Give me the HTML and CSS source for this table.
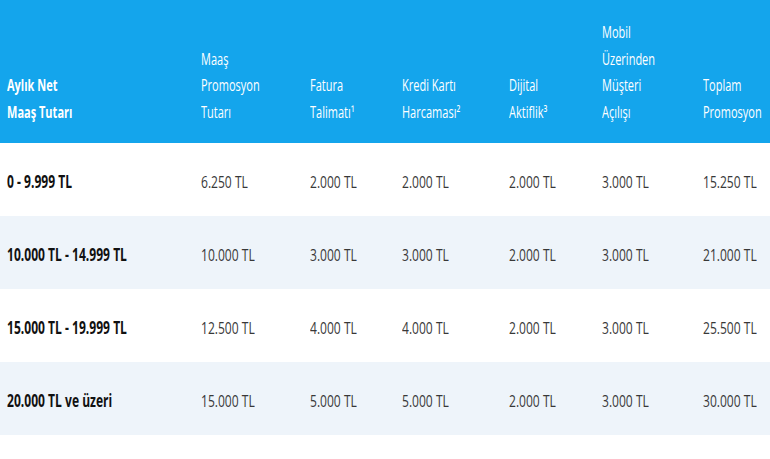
FILE: index.html
```html
<!DOCTYPE html>
<html lang="tr">
<head>
<meta charset="utf-8">
<title>Maaş Promosyon</title>
<link rel="stylesheet" href="styles.css">
</head>
<body>
<table class="promo">
  <colgroup>
    <col class="c1"><col class="c2"><col class="c3"><col class="c4"><col class="c5"><col class="c6"><col class="c7">
  </colgroup>
  <thead>
    <tr>
      <th class="first"><span class="sq">Aylık Net<br>Maaş Tutarı</span></th>
      <th><span class="sq">Maaş<br>Promosyon<br>Tutarı</span></th>
      <th><span class="sq">Fatura<br>Talimatı¹</span></th>
      <th><span class="sq">Kredi Kartı<br>Harcaması²</span></th>
      <th><span class="sq">Dijital<br>Aktiflik³</span></th>
      <th><span class="sq">Mobil<br>Üzerinden<br>Müşteri<br>Açılışı</span></th>
      <th><span class="sq">Toplam<br>Promosyon</span></th>
    </tr>
  </thead>
  <tbody>
    <tr>
      <td class="first"><span class="sq">0 - 9.999 TL</span></td>
      <td><span class="sq">6.250 TL</span></td>
      <td><span class="sq">2.000 TL</span></td>
      <td><span class="sq">2.000 TL</span></td>
      <td><span class="sq">2.000 TL</span></td>
      <td><span class="sq">3.000 TL</span></td>
      <td><span class="sq">15.250 TL</span></td>
    </tr>
    <tr class="alt">
      <td class="first"><span class="sq">10.000 TL - 14.999 TL</span></td>
      <td><span class="sq">10.000 TL</span></td>
      <td><span class="sq">3.000 TL</span></td>
      <td><span class="sq">3.000 TL</span></td>
      <td><span class="sq">2.000 TL</span></td>
      <td><span class="sq">3.000 TL</span></td>
      <td><span class="sq">21.000 TL</span></td>
    </tr>
    <tr>
      <td class="first"><span class="sq">15.000 TL - 19.999 TL</span></td>
      <td><span class="sq">12.500 TL</span></td>
      <td><span class="sq">4.000 TL</span></td>
      <td><span class="sq">4.000 TL</span></td>
      <td><span class="sq">2.000 TL</span></td>
      <td><span class="sq">3.000 TL</span></td>
      <td><span class="sq">25.500 TL</span></td>
    </tr>
    <tr class="alt">
      <td class="first"><span class="sq">20.000 TL ve üzeri</span></td>
      <td><span class="sq">15.000 TL</span></td>
      <td><span class="sq">5.000 TL</span></td>
      <td><span class="sq">5.000 TL</span></td>
      <td><span class="sq">2.000 TL</span></td>
      <td><span class="sq">3.000 TL</span></td>
      <td><span class="sq">30.000 TL</span></td>
    </tr>
  </tbody>
</table>
</body>
</html>
```

FILE: styles.css
```css
html, body {
  margin: 0;
  padding: 0;
  background: #ffffff;
}

.promo {
  width: 770px;
  border-collapse: collapse;
  table-layout: fixed;
  font-family: "Open Sans", "Liberation Sans", sans-serif;
}

.c1 { width: 194px; }
.c2 { width: 109px; }
.c3 { width: 92px; }
.c4 { width: 107px; }
.c5 { width: 93px; }
.c6 { width: 101px; }
.c7 { width: 74px; }

.sq {
  display: inline-block;
  white-space: nowrap;
  transform: scaleX(0.71);
  transform-origin: left center;
}

.promo thead tr {
  background: #14a5ec;
  height: 143px;
}

.promo th {
  color: #ffffff;
  font-size: 15.5px;
  font-weight: 400;
  text-align: left;
  vertical-align: bottom;
  line-height: 26.5px;
  padding: 0 0 18px 7px;
  white-space: nowrap;
}

.promo th.first {
  font-weight: 700;
}

.promo tbody tr {
  height: 73px;
}

.promo tbody tr.alt {
  background: #eef4fa;
}

.promo td {
  color: #383838;
  font-size: 17px;
  line-height: 22px;
  padding: 4px 0 0 7px;
  vertical-align: middle;
  white-space: nowrap;
}

.promo td.first {
  color: #111111;
  font-weight: 700;
}
```
